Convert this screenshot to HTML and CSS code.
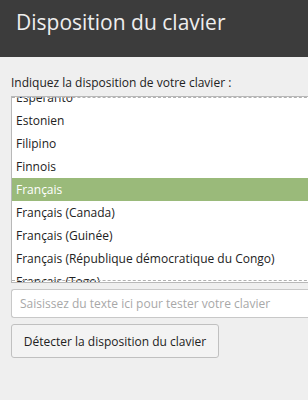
FILE: index.html
```html
<!DOCTYPE html>
<html lang="fr">
<head>
    <meta charset="UTF-8">
    <meta name="viewport" content="width=device-width, initial-scale=1.0">
    <title>Disposition du clavier</title>
    <link rel="stylesheet" href="styles.css">
</head>
<body>
    <div class="header">
        <h1>Disposition du clavier</h1>
    </div>
    <div class="content">
        <p class="label">Indiquez la disposition de votre clavier :</p>
        <div class="listbox">
            <ul class="list">
                <li>Esperanto</li>
                <li>Estonien</li>
                <li>Filipino</li>
                <li>Finnois</li>
                <li class="selected">Français</li>
                <li>Français (Canada)</li>
                <li>Français (Guinée)</li>
                <li>Français (République démocratique du Congo)</li>
                <li>Français (Togo)</li>
                <li>Frison</li>
            </ul>
        </div>
        <input class="test" type="text" placeholder="Saisissez du texte ici pour tester votre clavier">
        <button class="detect">Détecter la disposition du clavier</button>
    </div>
</body>
</html>
```
FILE: styles.css
```css
body { margin: 0; background: #efefef; font-family: "Open Sans", "DejaVu Sans", sans-serif; color: #222; overflow: hidden; }
.header { background: #3c3c3c; height: 57px; padding-left: 16px; box-sizing: border-box; }
.header h1 { margin: 0; font-size: 21px; font-weight: normal; color: #eeeeee; line-height: 44px; }
.content { padding-left: 11px; }
.label { margin: 17px 0 4px; font-size: 12px; line-height: 18px; color: #222; }
.listbox { position: relative; width: 310px; height: 185px; border: 1px solid #b8b8b8; border-right: none; background: #fff; overflow: hidden; }
.listbox::before, .listbox::after { content: ""; position: absolute; left: 0; right: 0; border-top: 1px dashed #b0b0b0; }
.listbox::before { top: 0; }
.listbox::after { bottom: 1px; }
.list { list-style: none; margin: -11px 0 0; padding: 0; }
.list li { height: 23px; line-height: 23px; padding-left: 4px; font-size: 12px; color: #222; white-space: nowrap; }
.list li.selected { background: #9aba7a; color: #fff; }
.test { display: block; box-sizing: border-box; width: 310px; height: 29px; margin-top: 6px; padding: 0 8px; border: 1px solid #c8c8c8; border-right: none; border-radius: 3px 0 0 3px; background: #fff; font-family: inherit; font-size: 12px; }
.test::placeholder { color: #a8a8a8; }
.detect { display: block; margin-top: 6px; height: 34px; width: 208px; border: 1px solid #c0c0c0; border-radius: 3px; background: #f3f3f3; font-family: inherit; font-size: 12px; color: #222; padding: 0; }
```
